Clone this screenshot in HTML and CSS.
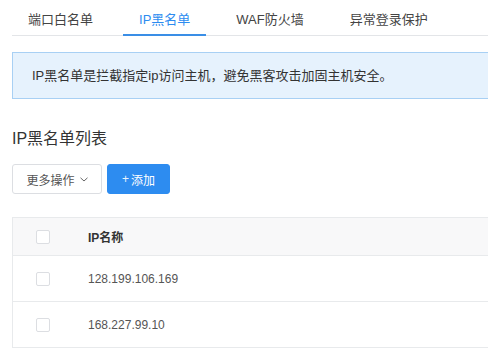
FILE: index.html
```html
<!DOCTYPE html>
<html lang="zh-CN">
<head>
<meta charset="utf-8">
<title>IP黑名单</title>
<link rel="stylesheet" href="styles.css">
</head>
<body>
<div class="page">
  <div class="tabs">
    <div class="tab">端口白名单</div>
    <div class="tab active">IP黑名单</div>
    <div class="tab">WAF防火墙</div>
    <div class="tab">异常登录保护</div>
  </div>
  <div class="alert">IP黑名单是拦截指定ip访问主机，避免黑客攻击加固主机安全。</div>
  <h2 class="title">IP黑名单列表</h2>
  <div class="toolbar">
    <button class="btn btn-default">更多操作<svg class="chev" width="8" height="5" viewBox="0 0 8 5"><path d="M0.5 0.8 L4 4 L7.5 0.8" fill="none" stroke="#666" stroke-width="1"/></svg></button>
    <button class="btn btn-primary"><span class="plus">+</span>添加</button>
  </div>
  <div class="table">
    <div class="row head">
      <div class="cell-check"><span class="checkbox"></span></div>
      <div class="cell-name">IP名称</div>
    </div>
    <div class="row">
      <div class="cell-check"><span class="checkbox"></span></div>
      <div class="cell-name">128.199.106.169</div>
    </div>
    <div class="row last">
      <div class="cell-check"><span class="checkbox"></span></div>
      <div class="cell-name">168.227.99.10</div>
    </div>
  </div>
</div>
</body>
</html>
```
FILE: styles.css
```css
html, body {
  margin: 0;
  padding: 0;
  background: #fff;
  overflow: hidden;
}
body {
  font-family: "Liberation Sans", "Noto Sans CJK SC", sans-serif;
  font-size: 13px;
  color: #333;
}
.page {
  padding-left: 12px;
}
.tabs {
  display: flex;
  height: 35px;
  border-bottom: 1px solid #e3e5e8;
}
.tab {
  height: 36px;
  box-sizing: border-box;
  padding: 5px 16px 0;
  line-height: 29px;
  margin-right: 14px;
  color: #444;
  white-space: nowrap;
}
.tab.active {
  color: #2d8cf0;
  border-bottom: 2px solid #3a8ee6;
}
.alert {
  margin-top: 16px;
  height: 45px;
  line-height: 45px;
  padding-left: 19px;
  background: #e6f2fd;
  border: 1px solid #a8d0f4;
  border-right: none;
  color: #333;
  white-space: nowrap;
}
.title {
  margin: 29px 0 0;
  font-size: 16px;
  font-weight: normal;
  line-height: 22px;
  color: #333;
}
.toolbar {
  display: flex;
  gap: 5px;
  margin-top: 14px;
}
.btn {
  height: 30px;
  box-sizing: border-box;
  border-radius: 3px;
  font-family: inherit;
  font-size: 12px;
  padding: 0;
  display: flex;
  align-items: center;
  justify-content: center;
}
.btn-default {
  width: 90px;
  background: #fff;
  border: 1px solid #dcdee2;
  color: #555;
  gap: 5px;
}
.btn-primary {
  width: 63px;
  background: #2d8cf0;
  border: 1px solid #2d8cf0;
  color: #fff;
}
.plus {
  font-weight: 300;
  margin-right: 2px;
  opacity: 0.9;
}
.table {
  margin-top: 23px;
  border: 1px solid #e8eaec;
  border-right: none;
}
.row {
  display: flex;
  align-items: center;
  height: 45px;
  border-bottom: 1px solid #e8eaec;
  color: #555;
  font-size: 12px;
}
.row.last {
  border-bottom: none;
}
.row.head {
  height: 37px;
  background: #f8f8f9;
  color: #333;
  font-weight: bold;
}
.cell-check {
  width: 75px;
  padding-left: 23px;
  box-sizing: border-box;
  display: flex;
}
.checkbox {
  width: 12px;
  height: 12px;
  border: 1px solid #dcdee2;
  border-radius: 2px;
  background: #fff;
}
.cell-name {
  flex: 1;
}
```
